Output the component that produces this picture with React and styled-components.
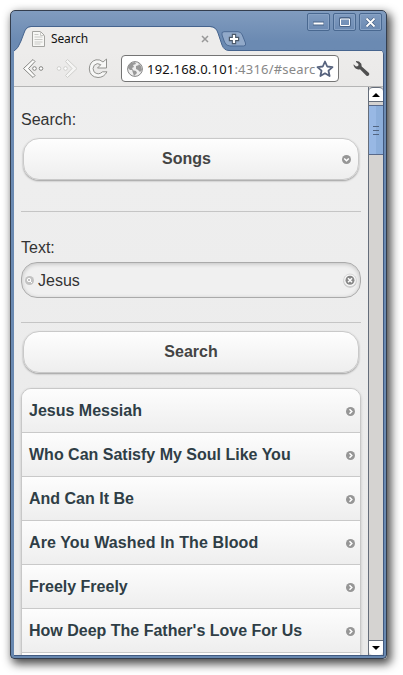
import React from "react";
import styled, { createGlobalStyle } from "styled-components";

const GlobalStyle = createGlobalStyle`
  * { box-sizing: border-box; }
  body { margin: 0; background: #fff; overflow: hidden; }
`;

const Desktop = styled.div`
  width: 403px;
  height: 675px;
  padding: 10px 0 0 10px;
  overflow: hidden;
  background: #fff;
`;

const Window = styled.div`
  display: flex;
  flex-direction: column;
  width: 377px;
  height: 649px;
  padding: 0 2px 2px 3px;
  border: 1px solid #343e4e;
  border-radius: 5px 5px 4px 4px;
  background: linear-gradient(#819cbf, #6b8ab2 30px, #6888b0);
  box-shadow: 3px 4px 10px 1px rgba(0, 0, 0, 0.72);
`;

const TitleBar = styled.header`
  display: flex;
  position: relative;
  height: 40px;
  flex: none;
  font-family: "Noto Sans", sans-serif;
`;

const TabShape = styled.svg`
  position: absolute;
  left: 0;
  top: 0;
`;

const Tab = styled.div`
  display: flex;
  position: relative;
  align-items: center;
  width: 204px;
  height: 24px;
  margin-top: 16px;
  padding: 0 9px 0 18px;
  color: #111;
  font-size: 12px;
`;

const TabTitle = styled.span`
  flex: 1;
  margin-left: 6px;
  line-height: 16px;
  letter-spacing: -0.15px;
`;

const NewTab = styled.svg`
  position: relative;
  margin: 20px 0 0 3px;
`;

const WindowButtons = styled.div`
  display: flex;
  gap: 3px;
  margin: 2px 2px 0 auto;
`;

const WindowButton = styled.button`
  display: grid;
  place-items: center;
  width: 23px;
  height: 18px;
  padding: 0;
  border: 1px solid #496890;
  border-radius: 2px;
  background: linear-gradient(#7f9bc0, #6c8ab2);
  box-shadow: inset 0 0 0 1px #88a2c4;
`;

const Client = styled.div`
  display: flex;
  flex: 1;
  min-height: 0;
  flex-direction: column;
  border: solid #405980;
  border-width: 0 1px 1px 0;
  border-radius: 0 4px 0 0;
  background: #edeceb;
  overflow: hidden;
`;

const Toolbar = styled.nav`
  display: flex;
  flex: none;
  align-items: center;
  height: 36px;
  padding: 0 10px 0 8px;
  border-bottom: 1px solid #b5b5b5;
  background: linear-gradient(#edeceb, #eae9e8);
`;

const NavIcon = styled.svg`
  flex: none;
  margin-right: ${(p) => p.$gap}px;
`;

const AddressBar = styled.div`
  display: flex;
  flex: none;
  align-items: center;
  width: 218px;
  height: 27px;
  padding: 0 2px 0 5px;
  border: 1px solid #747474;
  border-radius: 4px;
  background: #fff;
`;

const Url = styled.span`
  width: 169px;
  margin-left: 4px;
  overflow: hidden;
  color: #888;
  font: 13px/20px "Noto Sans", sans-serif;
  letter-spacing: 0.2px;
  white-space: nowrap;
`;

const Host = styled.span`
  color: #111;
`;

const WrenchIcon = styled.svg`
  flex: none;
  margin-left: 14px;
`;

const Viewport = styled.div`
  display: flex;
  flex: 1;
  min-height: 0;
`;

const Page = styled.main`
  flex: 1;
  min-width: 0;
  padding: 23px 7px 0;
  overflow: hidden;
  background: linear-gradient(#efefef, #e9e9e9);
  color: #333;
  font: 16px/20px "Liberation Sans", Arial, sans-serif;
`;

const Label = styled.label`
  display: block;
  height: ${(p) => p.$height}px;
`;

const Divider = styled.hr`
  height: 1px;
  margin: ${(p) => p.$before}px 0 ${(p) => p.$after}px;
  border: 0;
  background: #c5c5c5;
`;

const PillButton = styled.button`
  display: flex;
  align-items: center;
  justify-content: center;
  position: relative;
  width: calc(100% - 4px);
  height: 42px;
  margin: 0 2px;
  padding: 0 ${(p) => p.$inset || 0}px 1px 0;
  border: 1px solid #c9c9c9;
  border-radius: 16px;
  background: linear-gradient(#fefefe, #eee);
  box-shadow: 0 1px 2px rgba(0, 0, 0, 0.35);
  color: #444;
  font: bold 16px/20px "Liberation Sans", Arial, sans-serif;
`;

const PillIcon = styled.span`
  display: flex;
  position: absolute;
  right: 7px;
  top: 16px;
`;

const SearchField = styled.div`
  display: flex;
  align-items: center;
  height: 36px;
  padding: 1px 3px 0;
  border: 1px solid #aaa;
  border-radius: 16px;
  background: #f0f0f0;
  box-shadow: inset 0 1px 4px rgba(0, 0, 0, 0.2);
`;

const FieldText = styled.span`
  flex: 1;
  margin-left: 4px;
`;

const SongList = styled.ul`
  margin: 15px 0 0;
  padding: 0;
  border: 1px solid #c8c8c8;
  border-radius: 10px 10px 0 0;
  box-shadow: 0 1px 3px rgba(0, 0, 0, 0.18);
  overflow: hidden;
  list-style: none;
`;

const SongRow = styled.li`
  display: flex;
  align-items: center;
  justify-content: space-between;
  height: 44px;
  padding: 0 5px 0 7px;
  border-bottom: 1px solid #c9c9c9;
  background: linear-gradient(#fdfdfd, #eee);
  color: #2f3e46;
  font-weight: bold;
  letter-spacing: ${(p) => p.$tracking || 0}px;
  white-space: nowrap;
`;

const RowIcon = styled.span`
  display: flex;
  margin-top: 2px;
`;

const Scrollbar = styled.div`
  display: flex;
  flex: none;
  flex-direction: column;
  width: 15px;
  border-left: 1px solid #656d7a;
  background: #d5d3d1;
`;

const ScrollButton = styled.div`
  display: grid;
  place-items: center;
  height: 15px;
  border: solid #656d7a;
  border-width: ${(p) => (p.$end ? "1px 0 0" : "1px 0")};
  border-radius: ${(p) => (p.$end ? "0 0 4px 4px" : "4px 4px 0 0")};
  margin-top: ${(p) => (p.$end ? "auto" : 0)};
  background: #fff;
`;

const Thumb = styled.div`
  display: grid;
  place-content: center;
  gap: 3px;
  height: 50px;
  margin-top: 3px;
  border: solid #58698a;
  border-width: 1px 0;
  background: linear-gradient(90deg, #98b8e4 50%, #8caeda 50%);
`;

const Grip = styled.i`
  width: 6px;
  height: 1px;
  background: #526581;
`;

function RoundIcon({ path, size = 9, color = "#969696" }) {
  return (
    <svg width={size} height={size} viewBox="0 0 9 9">
      <circle cx="4.5" cy="4.5" r="4.5" fill={color} />
      <path d={path} fill="none" stroke="#fff" strokeWidth="1.5" />
    </svg>
  );
}

const songs = [
  { title: "Jesus Messiah" },
  { title: "Who Can Satisfy My Soul Like You" },
  { title: "And Can It Be" },
  { title: "Are You Washed In The Blood", tracking: 0.11 },
  { title: "Freely Freely" },
  { title: "How Deep The Father's Love For Us" },
  { title: "" },
];

function BrowserTitle() {
  return (
    <TitleBar>
      <TabShape width="368" height="42" viewBox="0 0 368 42">
        <path d="M0 42V40Q4 38 7 30L10 22Q12 16 17 16H196Q202 16 204 22L208 34Q210 39 215 39.5H368V42Z" fill="#edeceb" />
        <path d="M0 40Q4 38 7 30L10 22Q12 15.5 17 15.5H196Q202 15.5 204 22L208 34Q210 39.5 215 39.5H368" fill="none" stroke="#46648e" />
      </TabShape>
      <Tab>
        <svg width="13" height="16" viewBox="0 0 13 16">
          <path d="M.5.5h8l4 4v11H.5z" fill="#f7f7f5" stroke="#a4a4a1" />
          <path d="M8.5.5v4h4M2.5 3.5h4M2.5 6h8M2.5 8.5h8M2.5 11h8M2.5 13h6" fill="none" stroke="#c9c9c6" />
        </svg>
        <TabTitle>Search</TabTitle>
        <svg width="8" height="8" viewBox="0 0 8 8"><path d="m1 1 6 6m0-6L1 7" stroke="#989898" strokeWidth="1.5" /></svg>
      </Tab>
      <NewTab width="26" height="16" viewBox="0 0 26 16">
        <path d="M3 .7h14q3 0 4.3 3.3l3.2 8q1 3-2 3H9q-4 0-5.5-4L1 4Q0 .7 3 .7Z" fill="#91a9c9" stroke="#4d6b94" />
        <path d="M13 5v6M10 8h6" stroke="#4b5969" strokeWidth="4.4" strokeLinecap="square" />
        <path d="M13 4v8M9 8h8" stroke="#fff" strokeWidth="2.2" />
      </NewTab>
      <WindowButtons>
        <WindowButton aria-label="Minimize"><svg width="11" height="10"><path d="M0 6.5h11" stroke="#4a6488" strokeWidth="4" /><path d="M.5 6.5h10" stroke="#fff" strokeWidth="2" /></svg></WindowButton>
        <WindowButton aria-label="Maximize"><svg width="12" height="10"><rect x="1" y="1" width="10" height="8" rx="1" fill="none" stroke="#4a6488" strokeWidth="2" /><path d="M1.5 2h9v6.5h-9z" fill="none" stroke="#fff" /></svg></WindowButton>
        <WindowButton aria-label="Close"><svg width="11" height="11"><path d="m1.5 1.5 8 8m0-8-8 8" stroke="#4a6488" strokeWidth="3.2" /><path d="m1.5 1.5 8 8m0-8-8 8" stroke="#fff" strokeWidth="1.8" /></svg></WindowButton>
      </WindowButtons>
    </TitleBar>
  );
}

function BrowserToolbar() {
  return (
    <Toolbar>
      <NavIcon width="23" height="21" viewBox="0 0 23 21" $gap={11}>
        <path d="m11 1.5 2 2-6.5 7 6.5 7-2 2-9.5-9Z" fill="#fcfcfb" stroke="#858582" strokeLinejoin="round" />
        <circle cx="12.5" cy="10.5" r="1.8" fill="#fff" stroke="#858582" />
        <circle cx="19" cy="10.5" r="1.8" fill="#fff" stroke="#858582" />
      </NavIcon>
      <NavIcon width="23" height="21" viewBox="0 0 23 21" $gap={9}>
        <path d="m11.5 1.5-2 2 6.5 7-6.5 7 2 2 9.5-9Z" fill="#f5f5f4" stroke="#cfcfcc" strokeLinejoin="round" />
        <circle cx="9.5" cy="10.5" r="1.8" fill="#fff" stroke="#cfcfcc" />
        <circle cx="3" cy="10.5" r="1.8" fill="#fff" stroke="#cfcfcc" />
      </NavIcon>
      <NavIcon width="21" height="21" viewBox="0 0 21 21" $gap={12}>
        <path d="M15 4 18.5 1v9h-9l3.3-3.3Q9 4.2 6.2 7.3 4 10.5 6 13.8q4.2 4 8.5 0H19Q16 19.5 10 19.5 1.8 19 1.3 11 1.5 3.5 8 1.8q4-.7 7 2.2Z" fill="#f7f7f6" stroke="#92928f" strokeLinejoin="round" />
      </NavIcon>
      <AddressBar>
        <svg width="16" height="16" viewBox="0 0 16 16">
          <circle cx="8" cy="8" r="7.4" fill="#eee" stroke="#858585" />
          <path d="M1 5 4 2l4-1 1 2-3 1 1 2-2 1 1 2H3L1 7ZM11 2l3 3 1 4-2 2-2-2-2-1V5l3-1ZM5 9l4 1 1 2-2 2-1 1-1-3Z" fill="#989898" />
        </svg>
        <Url><Host>192.168.0.101</Host>:4316/#searc</Url>
        <svg width="18" height="18" viewBox="0 0 18 18"><path d="m9 1.5 2.2 5 5.3.6-4 3.6 1.1 5.3L9 13.3 4.4 16l1.1-5.3-4-3.6 5.3-.6Z" fill="#fff" stroke="#57637e" strokeWidth="1.8" strokeLinejoin="round" /></svg>
      </AddressBar>
      <WrenchIcon width="17" height="17" viewBox="0 0 17 17">
        <path d="M3 1l3 .5 2.3 2.2.4 2.8 7 6.2q1.3 1.4.2 2.6-1.2 1.3-2.7.2L7 9.2Q4 10 2 8 .3 6.5.5 4.3L3 6.5 5.2 6 5.5 4 3 2Z" fill="#505050" />
      </WrenchIcon>
    </Toolbar>
  );
}

export default function App() {
  return (
    <>
      <GlobalStyle />
      <Desktop>
        <Window>
          <BrowserTitle />
          <Client>
            <BrowserToolbar />
            <Viewport>
              <Page>
                <Label $height={28}>Search:</Label>
                <PillButton $inset={9}>Songs<PillIcon><RoundIcon path="m2.2 3.5 2.3 2.3 2.3-2.3" /></PillIcon></PillButton>
                <Divider $before={31} $after={26} />
                <Label $height={24}>Text:</Label>
                <SearchField>
                  <svg width="9" height="9" viewBox="0 0 9 9"><circle cx="4.5" cy="4.5" r="4.5" fill="#c2c2c2" /><circle cx="4" cy="4" r="1.7" fill="none" stroke="#fff" /><path d="m5 5 2 2" stroke="#fff" /></svg>
                  <FieldText>Jesus</FieldText>
                  <svg width="14" height="15" viewBox="0 0 14 15"><circle cx="7" cy="8" r="6.7" fill="#c6c6c6" /><circle cx="7" cy="7.3" r="6.3" fill="#f8f8f8" stroke="#ccc" strokeWidth=".7" /><circle cx="7" cy="7.3" r="4.5" fill="#888" /><path d="m5 5.3 4 4m0-4-4 4" stroke="#fff" strokeWidth="1.5" /></svg>
                </SearchField>
                <Divider $before={24} $after={8} />
                <PillButton>Search</PillButton>
                <SongList>
                  {songs.map(({ title, tracking }, i) => (
                    <SongRow key={i} $tracking={tracking}>
                      {title}
                      <RowIcon><RoundIcon path="M3.5 2.2 5.8 4.5 3.5 6.8" /></RowIcon>
                    </SongRow>
                  ))}
                </SongList>
              </Page>
              <Scrollbar>
                <ScrollButton><svg width="8" height="4"><path d="M0 4 4 0l4 4Z" /></svg></ScrollButton>
                <Thumb><Grip /><Grip /><Grip /></Thumb>
                <ScrollButton $end><svg width="8" height="4"><path d="m0 0 4 4 4-4Z" /></svg></ScrollButton>
              </Scrollbar>
            </Viewport>
          </Client>
        </Window>
      </Desktop>
    </>
  );
}
